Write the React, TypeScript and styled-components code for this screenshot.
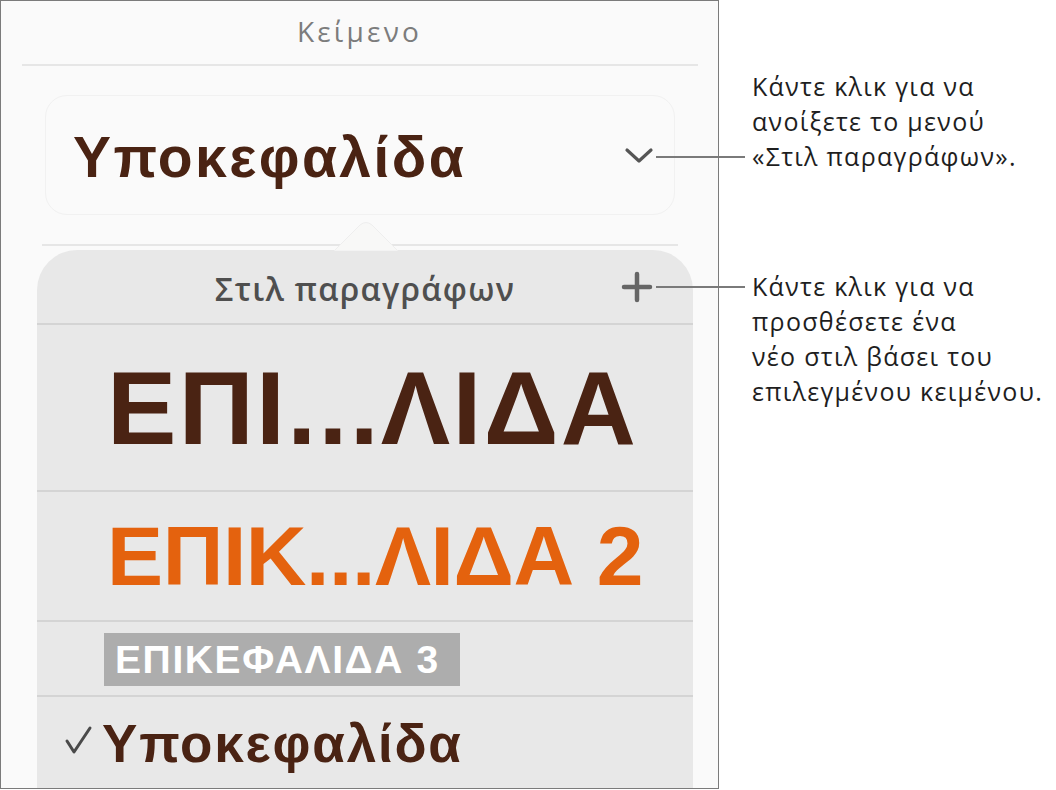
import { FC } from "react";
import styled, { createGlobalStyle } from "styled-components";

const GlobalStyle = createGlobalStyle`
  html, body {
    margin: 0;
    padding: 0;
    background: #ffffff;
  }
  body {
    font-family: "Liberation Sans", Arial, sans-serif;
  }
`;

const Page = styled.div`
  display: flex;
  width: 1056px;
  height: 790px;
  overflow: hidden;
`;

const Frame = styled.div`
  width: 719px;
  height: 789px;
  box-sizing: border-box;
  border: 1px solid #7b7b7b;
  background: #fafafa;
  display: flex;
  flex-direction: column;
  overflow: hidden;
  flex-shrink: 0;
`;

const PanelTitle = styled.div`
  height: 63px;
  display: flex;
  align-items: center;
  justify-content: center;
  font-family: "Open Sans", "Liberation Sans", sans-serif;
  font-size: 28px;
  letter-spacing: 3.2px;
  color: #7c7c7c;
  padding-bottom: 4px;
  box-sizing: border-box;
`;

const Rule = styled.div<{ $left: number; $right: number }>`
  height: 2px;
  margin: 0 ${(p) => p.$right}px 0 ${(p) => p.$left}px;
  background: #e6e6e6;
`;

const StyleButton = styled.div`
  margin: 29px 43px 0 44px;
  height: 120px;
  box-sizing: border-box;
  border: 1px solid #f1f1f1;
  border-radius: 22px;
  display: flex;
  align-items: center;
  justify-content: space-between;
  padding: 0 20px 0 27px;
`;

const CurrentStyle = styled.span`
  font-family: "Liberation Sans", Arial, sans-serif;
  font-weight: 700;
  font-size: 57px;
  color: #4a2313;
  letter-spacing: 2.4px;
  padding-top: 4px;
`;

const PopoverArea = styled.div`
  position: relative;
  margin-top: 29px;
  flex: 1;
  display: flex;
  flex-direction: column;
`;

const Arrow = styled.svg`
  position: absolute;
  left: 331px;
  top: -23px;
`;

const Popover = styled.div`
  margin: 4px 25px 0 36px;
  flex: 1;
  background: #e8e8e8;
  border-radius: 40px 40px 0 0;
  display: flex;
  flex-direction: column;
`;

const PopoverHeader = styled.div`
  position: relative;
  height: 75px;
  flex-shrink: 0;
  border-bottom: 2px solid #d4d4d4;
  display: flex;
  align-items: center;
  justify-content: center;
  font-family: "Open Sans", "Liberation Sans", sans-serif;
  font-weight: 600;
  font-size: 32px;
  letter-spacing: 1.3px;
  color: #4f4f4f;
  padding-top: 4px;
  box-sizing: border-box;
`;

const AddButton = styled.svg`
  position: absolute;
  right: 40px;
  top: 21px;
`;

const StyleRow = styled.div<{ $height: number }>`
  height: ${(p) => p.$height}px;
  flex-shrink: 0;
  border-bottom: 2px solid #d4d4d4;
  display: flex;
  align-items: center;
  padding-left: 70px;
`;

const LastRow = styled.div`
  flex: 1;
  display: flex;
  align-items: flex-start;
  padding: 20px 0 0 26px;
  gap: 9px;
`;

const Sample = styled.span<{ $size: number; $color: string; $spacing?: number }>`
  font-family: "Liberation Sans", Arial, sans-serif;
  font-weight: 700;
  font-size: ${(p) => p.$size}px;
  line-height: 1;
  color: ${(p) => p.$color};
  letter-spacing: ${(p) => p.$spacing || 0}px;
  white-space: nowrap;
`;

const BoxedSample = styled.span`
  margin-left: -3px;
  margin-top: 1px;
  background: #adadad;
  color: #ffffff;
  font-family: "Liberation Sans", Arial, sans-serif;
  font-weight: 700;
  font-size: 39px;
  line-height: 53px;
  height: 53px;
  padding: 0 20px 0 11px;
  letter-spacing: 1.6px;
  white-space: nowrap;
`;

const CheckMark = styled.svg`
  margin-top: 7px;
  flex-shrink: 0;
`;

const Notes = styled.div`
  display: flex;
  flex-direction: column;
  padding: 69px 0 0 33px;
  gap: 95px;
`;

const Note = styled.div`
  position: relative;
  font-family: "Open Sans", "Liberation Sans", sans-serif;
  font-size: 25px;
  line-height: 35px;
  letter-spacing: 1.3px;
  color: #1e1e1e;
  white-space: nowrap;
`;

const Leader = styled.div<{ $top: number; $left: number }>`
  position: absolute;
  top: ${(p) => p.$top}px;
  left: ${(p) => p.$left}px;
  width: ${(p) => -p.$left - 7}px;
  height: 2px;
  background: #7a7a7a;
`;

const App: FC = () => {
  return (
    <>
      <GlobalStyle />
      <Page>
        <Frame>
          <PanelTitle>Κείμενο</PanelTitle>
          <Rule $left={21} $right={20} />
          <StyleButton>
            <CurrentStyle>Υποκεφαλίδα</CurrentStyle>
            <svg width="30" height="18" viewBox="0 0 30 18">
              <path
                d="M3 4 L15 15 L27 4"
                fill="none"
                stroke="#555555"
                strokeWidth="3.2"
                strokeLinecap="round"
                strokeLinejoin="round"
              />
            </svg>
          </StyleButton>
          <PopoverArea>
            <Rule $left={41} $right={40} />
            <Arrow width="68" height="30" viewBox="0 0 68 30">
              <path
                d="M2 30 L28 4 Q34 -1 40 4 L66 30 Z"
                fill="#f8f8f7"
                stroke="#eeeeee"
                strokeWidth="1"
              />
            </Arrow>
            <Popover>
              <PopoverHeader>
                Στιλ παραγράφων
                <AddButton width="32" height="32" viewBox="0 0 32 32">
                  <path
                    d="M16 3 V29 M3 16 H29"
                    stroke="#666666"
                    strokeWidth="4.5"
                    strokeLinecap="round"
                  />
                </AddButton>
              </PopoverHeader>
              <StyleRow $height={165}>
                <Sample $size={104} $color="#4a2313" $spacing={2.3}>
                  ΕΠΙ...ΛΙΔΑ
                </Sample>
              </StyleRow>
              <StyleRow $height={128}>
                <Sample $size={84} $color="#e4620e" $spacing={-0.4}>
                  ΕΠΙΚ...ΛΙΔΑ 2
                </Sample>
              </StyleRow>
              <StyleRow $height={73}>
                <BoxedSample>ΕΠΙΚΕΦΑΛΙΔΑ 3</BoxedSample>
              </StyleRow>
              <LastRow>
                <CheckMark width="30" height="32" viewBox="0 0 30 32">
                  <path
                    d="M4 17 L11 28 L27 4"
                    fill="none"
                    stroke="#4a4a4a"
                    strokeWidth="3"
                    strokeLinecap="round"
                    strokeLinejoin="round"
                  />
                </CheckMark>
                <Sample $size={53} $color="#4a2313" $spacing={1.8}>
                  Υποκεφαλίδα
                </Sample>
              </LastRow>
            </Popover>
          </PopoverArea>
        </Frame>
        <Notes>
          <Note>
            <Leader $top={87} $left={-96} />
            Κάντε κλικ για να
            <br />
            ανοίξετε το μενού
            <br />
            «Στιλ παραγράφων».
          </Note>
          <Note>
            <Leader $top={17} $left={-96} />
            Κάντε κλικ για να
            <br />
            προσθέσετε ένα
            <br />
            νέο στιλ βάσει του
            <br />
            επιλεγμένου κειμένου.
          </Note>
        </Notes>
      </Page>
    </>
  );
};

export default App;
